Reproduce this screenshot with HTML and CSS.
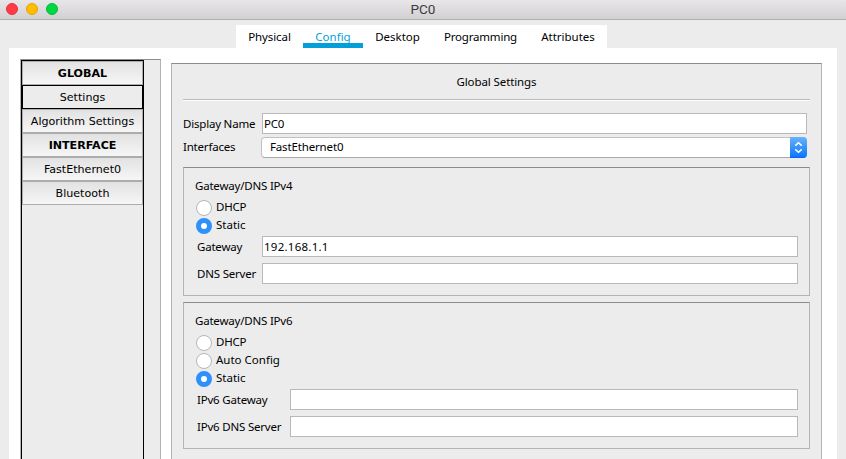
FILE: index.html
```html
<!DOCTYPE html>
<html lang="en">
<head>
<meta charset="utf-8">
<title>PC0</title>
<link rel="stylesheet" href="styles.css">
</head>
<body>
<header class="titlebar">
  <div class="lights"><i class="light red"></i><i class="light amber"></i><i class="light green"></i></div>
  <h1>PC0</h1>
</header>
<nav class="tabs">
  <a class="tab physical"><span>Physical</span></a>
  <a class="tab config active"><span>Config</span></a>
  <a class="tab desktop"><span>Desktop</span></a>
  <a class="tab programming"><span>Programming</span></a>
  <a class="tab attributes"><span>Attributes</span></a>
</nav>
<main class="page">
  <aside class="sidebar">
    <div class="list">
      <div class="item head first">GLOBAL</div>
      <div class="item selected">Settings</div>
      <div class="item">Algorithm Settings</div>
      <div class="item head">INTERFACE</div>
      <div class="item">FastEthernet0</div>
      <div class="item">Bluetooth</div>
    </div>
  </aside>
  <section class="settings">
    <h2>Global Settings</h2>
    <hr>
    <div class="row name"><label>Display Name</label><div class="field">PC0</div></div>
    <div class="row iface"><label>Interfaces</label>
      <div class="select"><span>FastEthernet0</span>
        <div class="stepper"><svg width="17" height="21" viewBox="0 0 17 21"><path d="M5.3 8.6 8.5 5.7l3.2 2.9M5.3 12.4l3.2 2.9 3.2-2.9" fill="none" stroke="#fff" stroke-width="1.5"/></svg></div>
      </div>
    </div>
    <section class="group v4">
      <h3>Gateway/DNS IPv4</h3>
      <div class="radio"><i></i><span class="dhcp">DHCP</span></div>
      <div class="radio on"><i></i><span>Static</span></div>
      <div class="row"><label>Gateway</label><div class="field ip">192.168.1.1</div></div>
      <div class="row"><label>DNS Server</label><div class="field"></div></div>
    </section>
    <section class="group v6">
      <h3>Gateway/DNS IPv6</h3>
      <div class="radio"><i></i><span class="dhcp">DHCP</span></div>
      <div class="radio"><i></i><span>Auto Config</span></div>
      <div class="radio on"><i></i><span>Static</span></div>
      <div class="row"><label>IPv6 Gateway</label><div class="field"></div></div>
      <div class="row"><label>IPv6 DNS Server</label><div class="field"></div></div>
    </section>
  </section>
</main>
</body>
</html>
```
FILE: styles.css
```css
* { box-sizing: border-box; }
body {
  margin: 0;
  height: 459px;
  overflow: hidden;
  background: #ececec;
  color: #000;
  font: 11.5px/16px "Noto Sans", sans-serif;
  white-space: nowrap;
}
h1, h2, h3 { margin: 0; font: inherit; }

.titlebar {
  display: grid;
  grid-template-columns: 1fr auto 1fr;
  height: 20px;
  border-bottom: 1px solid #b1afb1;
  background: linear-gradient(#e8e6e8, #d2d0d2);
}
.titlebar h1 { color: #3c3c3c; font: 13.5px/19px Roboto, sans-serif; }
.lights { display: flex; gap: 8px; padding: 3px 6px; }
.light { width: 12px; height: 12px; border-radius: 50%; }
.red { background: #ff3b47; border: 1px solid #e9303f; }
.amber { background: #ffbd00; border: 1px solid #e6a400; }
.green { background: #00d742; border: 1px solid #00bd38; }

.tabs {
  display: flex;
  width: 371px;
  height: 23px;
  margin: 5px 0 0 236px;
  background: #fff;
}
.tab { display: flex; justify-content: center; height: 23px; padding-top: 4px; }
.physical { width: 67px; letter-spacing: -0.1px; }
.config { width: 60px; }
.desktop { width: 69px; }
.programming { width: 97px; letter-spacing: -0.2px; }
.attributes { width: 78px; }
.active { color: #049fd9; border-bottom: 5px solid #049fd9; }

.page {
  display: flex;
  align-items: flex-start;
  gap: 10px;
  width: 828px;
  height: 411px;
  margin-left: 9px;
  padding: 11px 15px 0 11px;
  background: #fff;
}
.sidebar {
  width: 141px;
  height: 400px;
  border: 1px solid #b4b4b4;
  border-top-color: #8c8c8c;
  border-bottom: 0;
  background: #ececec;
}
.list {
  width: 123px;
  height: 400px;
  border: 1px solid #000;
  font: 11.1px/23px "DejaVu Sans", sans-serif;
  text-align: center;
}
.item {
  height: 24px;
  border: 1px solid #adadad;
  background: linear-gradient(#e2e2e2, #f6f6f6);
}
.head { font-weight: bold; }
.selected { border-color: #000; background: #ececec; }

.settings {
  width: 651px;
  height: 396px;
  margin-top: 4px;
  padding: 0 11px;
  border: 1px solid #b4b4b4;
  border-top-color: #8c8c8c;
  border-bottom: 0;
  background: #ececec;
}
h2 { padding-top: 10px; height: 35px; text-align: center; letter-spacing: -0.1px; }
hr { height: 2px; margin: 0; border: 0; border-top: 1px solid #bababa; background: #fff; }
.row { display: grid; grid-template-columns: 79px 1fr; height: 21px; line-height: 22px; letter-spacing: -0.2px; }
.name { margin: 12px 3px 3px 0; }
.iface { grid-template-columns: 78px 1fr; margin-right: 3px; }
.iface label { line-height: 20px; }
.field { height: 21px; padding-left: 1px; border: 1px solid #b9b9b9; background: #fff; line-height: 20px; }
.ip { letter-spacing: 0.25px; }
.select {
  display: flex;
  justify-content: space-between;
  height: 21px;
  padding-left: 8px;
  border: 1px solid #c0c0c0;
  border-right: 0;
  border-bottom-color: #a8a8a8;
  border-radius: 4px;
  background: #fff;
  line-height: 18px;
}
.select span { letter-spacing: -0.15px; }
.stepper {
  width: 17px;
  height: 21px;
  margin: -1px 0;
  border-radius: 0 4px 4px 0;
  background: linear-gradient(#6bb3fa, #3793fc 50%, #087afe 94%, #1450ff);
}
.stepper svg { display: block; }

.group {
  padding: 9px 11px 0;
  border: 1px solid #b4b4b4;
  border-top-color: #8c8c8c;
}
.v4 { height: 129px; margin-top: 9px; }
.v6 { height: 147px; margin-top: 6px; }
h3 { height: 22px; line-height: 18px; letter-spacing: -0.2px; }
.radio { display: flex; align-items: center; gap: 4px; height: 18px; padding-left: 1px; }
.radio i { width: 16px; height: 16px; border: 1px solid #b5b5b5; border-radius: 50%; background: #fff; }
.radio span { line-height: 16px; margin-top: -2px; }
.dhcp { letter-spacing: -0.2px; }
.radio.on i { border: 5px solid #2f90fb; }
.group .row { grid-template-columns: 65px 1fr; padding-left: 2px; margin-bottom: 6px; }
.radio + .row { margin-top: 1px; }
.v6 .row { grid-template-columns: 93px 1fr; }
```
